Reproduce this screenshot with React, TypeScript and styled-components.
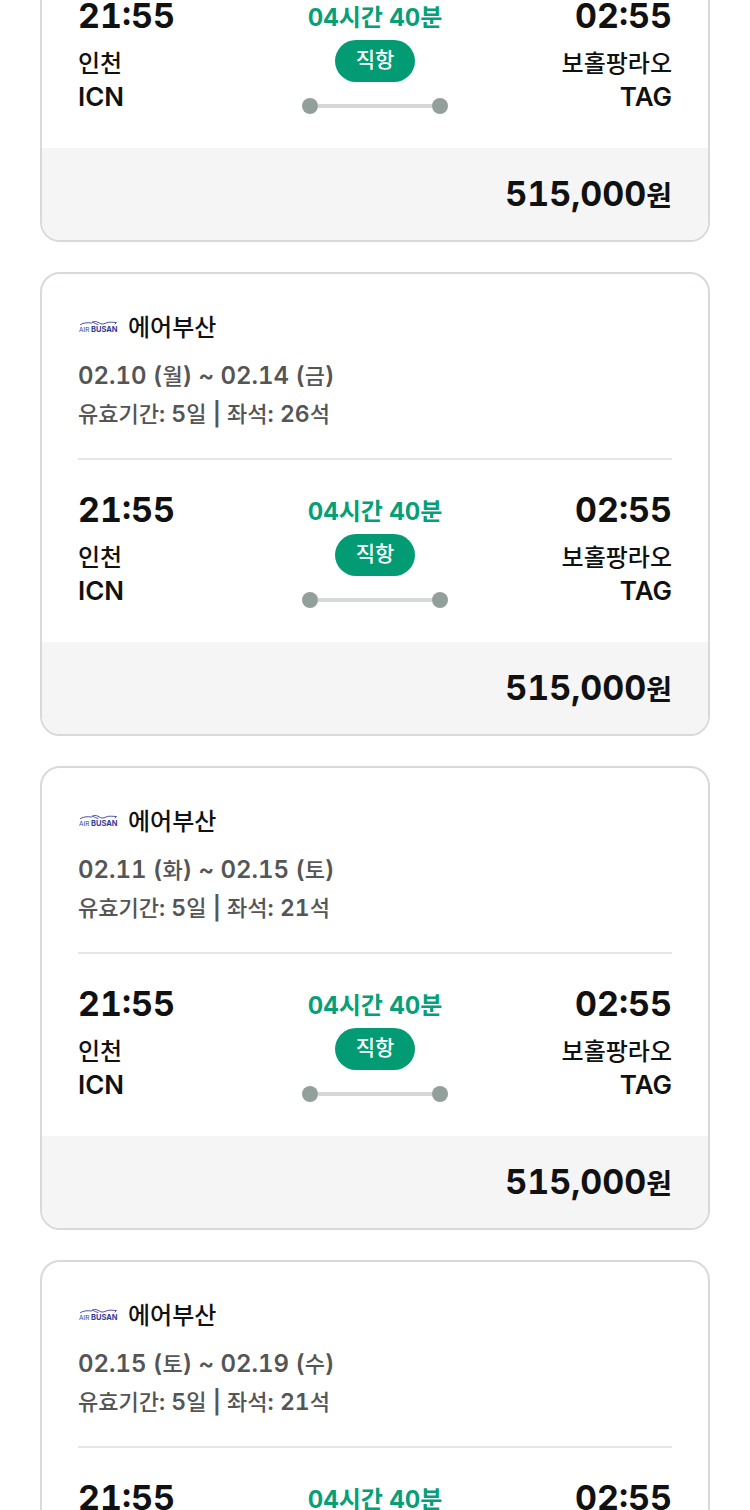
import React from "react";
import styled, { createGlobalStyle } from "styled-components";

const GlobalStyle = createGlobalStyle`
  *, *::before, *::after { box-sizing: border-box; }
  body {
    margin: 0;
    background: #fff;
    color: #111;
    font-family: Inter, "Noto Sans CJK KR", sans-serif;
    font-variant-numeric: tabular-nums;
    font-optical-sizing: none;
  }
  h2, p { margin: 0; }
`;

const Screen = styled.main`
  height: 100vh;
  overflow: hidden;
  padding: 0 40px;
`;

const List = styled.ul`
  display: flex;
  flex-direction: column;
  gap: 30px;
  margin: 0;
  padding: 0;
  list-style: none;
`;

const Card = styled.li<{ $continued: boolean }>`
  flex: none;
  overflow: hidden;
  border: 2px solid #d8dada;
  border-top-width: ${(p) => (p.$continued ? 0 : 2)}px;
  border-radius: ${(p) => (p.$continued ? "0 0 20px 20px" : "20px")};
  margin-top: ${(p) => (p.$continued ? -34 : 0)}px;
`;

const Summary = styled.header`
  margin: 0 36px;
  padding: 35px 0 25px;
  border-bottom: 2px solid #e5e6e6;
`;

const Airline = styled.div`
  display: flex;
  align-items: center;
  gap: 10px;
  height: 38px;
  margin-bottom: 10px;
`;

const Logo = styled.svg`
  width: 40px;
  height: 16px;
`;

const AirlineName = styled.h2`
  font-size: 24px;
  font-weight: 500;
  line-height: 38px;
`;

const Detail = styled.p<{ $size: number }>`
  height: 38px;
  color: #555;
  font-size: ${(p) => p.$size}px;
  font-weight: 600;
  line-height: 38px;
  white-space: nowrap;
`;

const Hangul = styled.span`
  font-size: 22px;
  font-weight: 500;
`;

const Trip = styled.section`
  display: grid;
  grid-template-columns: 1fr 146px 1fr;
  padding: 30px 36px 34px;
`;

const Stop = styled.div<{ $end?: boolean }>`
  text-align: ${(p) => (p.$end ? "right" : "left")};
`;

const Time = styled.p`
  margin-bottom: 10px;
  font-size: 34px;
  font-weight: 700;
  line-height: 40px;
`;

const Place = styled.p`
  height: 34px;
  font-size: 24px;
  font-weight: 500;
  line-height: 36px;
  white-space: nowrap;
`;

const Code = styled.p`
  font-size: 26px;
  font-weight: 600;
  line-height: 34px;
`;

const Middle = styled.div`
  display: flex;
  flex-direction: column;
  align-items: center;
`;

const Duration = styled.p`
  height: 44px;
  font-size: 24px;
  font-weight: 700;
  line-height: 44px;
  color: #05a077;
  white-space: nowrap;
`;

const Badge = styled.span`
  width: 80px;
  height: 42px;
  border-radius: 21px;
  background: #039b73;
  color: #fff;
  font-size: 21px;
  font-weight: 500;
  line-height: 40px;
  text-align: center;
`;

const Route = styled.div`
  display: flex;
  align-items: center;
  width: 100%;
  margin-top: 16px;
`;

const Dot = styled.span`
  width: 16px;
  height: 16px;
  border-radius: 50%;
  background: #929f9a;
`;

const Line = styled.span`
  flex: 1;
  height: 4px;
  background: #d5d8d7;
`;

const Price = styled.footer`
  height: 92px;
  padding: 0 36px;
  background: #f5f5f5;
  font-size: 34px;
  font-weight: 700;
  line-height: 92px;
  text-align: right;
`;

const Won = styled.span`
  font-size: 28px;
`;

type Flight = { dates?: string; seats?: number };

const flights: Flight[] = [
  {},
  { dates: "02.10 (월) ~ 02.14 (금)", seats: 26 },
  { dates: "02.11 (화) ~ 02.15 (토)", seats: 21 },
  { dates: "02.15 (토) ~ 02.19 (수)", seats: 21 },
];

/* Sets the Hangul runs of a line slightly smaller than its digits. */
function Mixed({ text }: { text: string }) {
  return (
    <>
      {text.split(/([가-힣]+)/).map((run, i) =>
        i % 2 ? <Hangul key={i}>{run}</Hangul> : run
      )}
    </>
  );
}

function AirBusanLogo() {
  return (
    <Logo viewBox="0 0 80 32" aria-hidden="true">
      <g fill="none" stroke="#4a52a6" strokeLinecap="round">
        <path d="M5 9C12 5 20 5 27 6C31 2 36 2 41 5" strokeWidth="2" />
        <path d="M29 4C33 7 37 8 40 9M41 5C46 9 50 9 56 6C63 3 70 5 77 5L74 8" strokeWidth="2" />
      </g>
      <g fill="#343b98">
        <text x="2" y="24" fontSize="13">AIR</text>
        <text x="26" y="24" fontSize="15" fontWeight="700">BUSAN</text>
      </g>
    </Logo>
  );
}

function FlightCard({ dates, seats }: Flight) {
  return (
    <Card $continued={!dates}>
      {dates && (
        <Summary>
          <Airline>
            <AirBusanLogo />
            <AirlineName>에어부산</AirlineName>
          </Airline>
          <Detail $size={24}>
            <Mixed text={dates} />
          </Detail>
          <Detail $size={23}>
            <Mixed text={`유효기간: 5일 | 좌석: ${seats}석`} />
          </Detail>
        </Summary>
      )}
      <Trip>
        <Stop>
          <Time>21:55</Time>
          <Place>인천</Place>
          <Code>ICN</Code>
        </Stop>
        <Middle>
          <Duration>04시간 40분</Duration>
          <Badge>직항</Badge>
          <Route>
            <Dot />
            <Line />
            <Dot />
          </Route>
        </Middle>
        <Stop $end>
          <Time>02:55</Time>
          <Place>보홀팡라오</Place>
          <Code>TAG</Code>
        </Stop>
      </Trip>
      <Price>
        515,000<Won>원</Won>
      </Price>
    </Card>
  );
}

export default function App() {
  return (
    <>
      <GlobalStyle />
      <Screen>
        <List>
          {flights.map((flight, i) => (
            <FlightCard key={i} {...flight} />
          ))}
        </List>
      </Screen>
    </>
  );
}
